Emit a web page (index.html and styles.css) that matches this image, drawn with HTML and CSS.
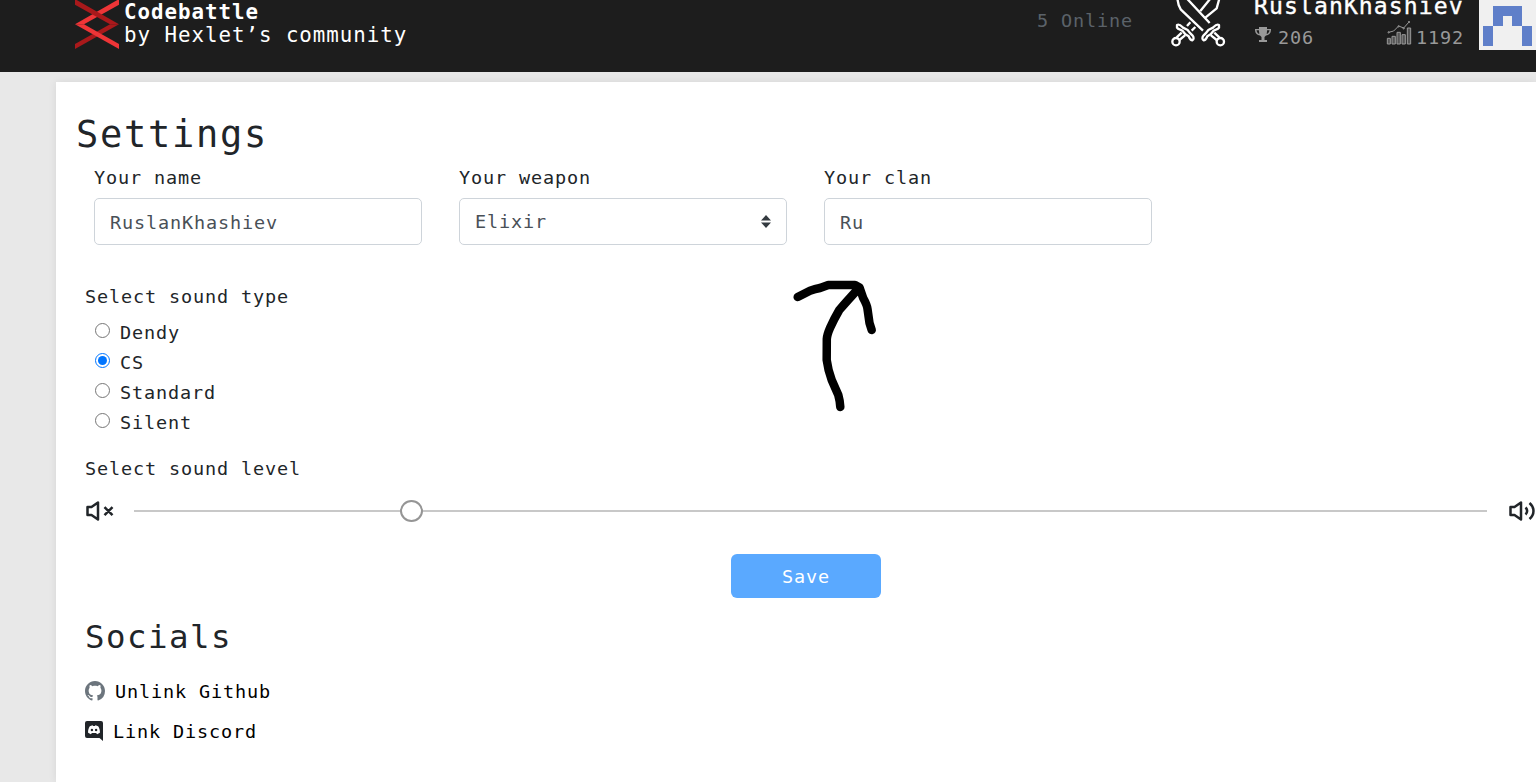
FILE: index.html
```html
<!DOCTYPE html>
<html lang="en">
<head>
<meta charset="utf-8">
<title>Codebattle</title>
<link rel="stylesheet" href="styles.css">
</head>
<body>
<header class="header">
  <svg class="logo" viewBox="45 0 132 147">
    <path fill="#ee3537" d="M45 73 172 0h5v14L72 73z"/>
    <path fill="#a9191b" d="M45 0h5L177 73h-27L45 14z"/>
    <path fill="#a9191b" d="M177 73 45 147v-15L150 73z"/>
    <path fill="#ee3537" d="M45 73 177 147v-15L72 73z"/>
  </svg>
  <div class="brand"><b>Codebattle</b><span>by Hexlet’s community</span></div>
  <div class="online">5 Online</div>
  <svg class="swords" viewBox="450 0 168 144">
    <path d="M472-4 476 15 482 28 549 92M501-4 569 69M598-4 590 25 557 52M571-4 541 33"/>
    <path d="M597 75c-8-4-13 3-18 8l-14 7-6 8-8 8c-5 6-5 12 0 15 6 0 8-5 11-12l10-6 8-10c6-5 13-3 17-10zM573 106l17 14M583 98l15 14"/>
    <path d="M471 75c8-4 13 3 18 8l14 7 6 8 8 8c5 6 5 12 0 15-6 0-8-5-11-12l-10-6-8-10c-6-5-13-3-17-10zM495 106l-17 14M485 98l-15 14M511 67l-10 11M526 81l-11 11"/>
    <circle cx="468" cy="125" r="11"/><circle cx="601" cy="125" r="11"/>
  </svg>
  <div class="user">
    <div class="user-name">RuslanKhashiev</div>
    <div class="stats">
      <svg class="trophy" viewBox="0 0 16 16"><path fill="#999" d="M4 0h8v2h4c0 4-1.500 6-5 6.500L9.500 10v3H12v2H4v-2h2.500v-3L5 8.500C1.500 8 0 6 0 2h4zM1.500 3.200C1.800 5 2.500 6.300 4.300 7L3.900 3.200zM14.500 3.200h-2.400L11.700 7c1.800-.7 2.500-2 2.800-3.800z"/></svg>
      <span class="wins">206</span>
      <svg class="chart" viewBox="438 58 76 75"><path class="bars" d="M441 113h9v17h-9zM455 107h10v23h-10zM470 95h10v35h-10zM485 102h10v28h-10zM501 82h10v48h-10z"/><path class="trend" d="M445 95l15-4 15-15 15 6 16-18"/><circle cx="445" cy="95" r="2"/><circle cx="475" cy="77" r="2"/><circle cx="490" cy="83" r="2"/><circle cx="506" cy="64" r="2"/></svg>
      <span>1192</span>
    </div>
  </div>
  <svg class="avatar" viewBox="0 0 57 50"><path fill="#f0f0f0" d="M0 0h57v50H0z"/><path fill="#5f7fc9" d="M14 6h29v20h10v20H43V26H33V16h-9v10H14v20H4V26h10z"/></svg>
</header>

<main class="card">
  <h1 class="title">Settings</h1>
  <form class="form">
    <div class="fields">
      <label class="field"><span>Your name</span><input class="control" type="text" value="RuslanKhashiev"></label>
      <label class="field"><span>Your weapon</span>
        <span class="control select">Elixir<svg class="caret" viewBox="0 0 10 13"><path fill="#343a40" d="M5 0l5 5.500H0zM0 7.500h10L5 13z"/></svg></span></label>
      <label class="field"><span>Your clan</span><input class="control" type="text" value="Ru"></label>
    </div>
    <div class="legend">Select sound type</div>
    <div class="radios">
      <label class="radio"><input type="radio" name="sound"><span>Dendy</span></label>
      <label class="radio"><input type="radio" name="sound" checked><span>CS</span></label>
      <label class="radio"><input type="radio" name="sound"><span>Standard</span></label>
      <label class="radio"><input type="radio" name="sound"><span>Silent</span></label>
    </div>
    <div class="legend level">Select sound level</div>
    <div class="volume">
      <svg class="mute" viewBox="0 0 28 20"><path d="M1.500 6h4l6.500-4.500v17L5.500 14h-4zM18.500 6.200l8 8M26.500 6.200l-8 8"/></svg>
      <div class="track"><span class="thumb"></span></div>
      <svg class="loud" viewBox="0 0 28 20"><path d="M1.500 6h4L12 1.500v17L5.500 14h-4zM16.500 6.500c2.200 2 2.200 5 0 7M20.500 2c5.300 4.500 5.300 11.500 0 16"/></svg>
    </div>
    <button class="save" type="button">Save</button>
  </form>
  <h2 class="subtitle">Socials</h2>
  <div class="social">
    <svg class="github" viewBox="0 0 16 16"><path fill="#6c757d" d="M8 0C3.580 0 0 3.580 0 8c0 3.540 2.290 6.530 5.470 7.590.4.070.55-.17.55-.38 0-.19-.01-.82-.01-1.490-2.010.37-2.530-.49-2.690-.94-.09-.23-.48-.94-.82-1.130-.28-.15-.68-.52-.01-.53.63-.01 1.080.58 1.230.82.72 1.210 1.870.87 2.330.66.07-.52.28-.87.51-1.070-1.780-.2-3.640-.89-3.640-3.950 0-.87.31-1.590.82-2.150-.08-.2-.36-1.020.08-2.120 0 0 .67-.21 2.200.82.64-.18 1.320-.27 2-.27s1.360.09 2 .27c1.530-1.040 2.200-.82 2.200-.82.44 1.100.16 1.920.08 2.120.51.56.82 1.270.82 2.150 0 3.070-1.870 3.750-3.650 3.950.29.25.54.73.54 1.480 0 1.070-.01 1.930-.01 2.200 0 .21.15.46.55.38A8.010 8.010 0 0 0 16 8c0-4.420-3.580-8-8-8z"/></svg>
    <a>Unlink Github</a>
  </div>
  <div class="social">
    <svg class="discord" viewBox="0 0 18 20"><path fill="#212529" d="M2 0h14a2 2 0 0 1 2 2v18l-3.500-3H2a2 2 0 0 1-2-2V2a2 2 0 0 1 2-2z"/><path fill="#fff" d="M4.800 5.200 7.600 4.200l.5.700h1.800l.5-.7 2.800 1c1.300 2 1.900 4.200 1.700 6.500l-2.800 1.500-1-1.300H6.900l-1 1.300-2.800-1.500c-.2-2.300.4-4.500 1.700-6.500z"/><circle cx="6.900" cy="9" r="1.200" fill="#212529"/><circle cx="11.100" cy="9" r="1.200" fill="#212529"/></svg>
    <a>Link Discord</a>
  </div>
</main>

<svg class="arrow" viewBox="785 270 100 150"><path d="M797.700 297 810 290.700Q815 289 820 288L828.300 285 855 285 859.500 287.500M859.500 287.500 863.300 298.300Q867 305 867.500 309L869.500 323 871.700 330M859.500 287.500Q847 301 839.300 310 834 319 830 328 827 335 826.800 339L826.700 360Q828 370 831.700 380L838.300 395Q840 401 840.300 407"/></svg>
</body>
</html>
```
FILE: styles.css
```css
* { box-sizing: border-box; }
body {
  margin: 0;
  height: 782px;
  overflow: hidden;
  background: #e8e8e8;
  color: #212529;
  font: 18.500px/30px "DejaVu Sans Mono", monospace;
}
/* Widens the glyph pitch evenly at every size. */
* { letter-spacing: .0466em; }
svg { display: block; flex: none; }
.header {
  display: flex;
  align-items: flex-start;
  height: 72px;
  padding-left: 75px;
  overflow: hidden;
  background: #1d1d1d;
  color: #fff;
}
.logo { width: 44px; height: 49px; }
.brand {
  display: flex;
  flex: none;
  flex-direction: column;
  width: 917px;
  padding: 1px 0 0 5px;
  font-size: 20.800px;
  line-height: 23px;
}
.online { flex: none; width: 134px; padding: 6px 0 0 1px; color: #5b6269; }
.swords { width: 56px; height: 48px; fill: none; stroke: #fff; stroke-width: 7; stroke-linejoin: round; }
.user { flex: none; width: 225px; margin: -10px 0 0 28px; }
.user-name { font-size: 23.100px; line-height: 32px; -webkit-text-stroke: .4px #fff; }
.stats { display: flex; align-items: flex-start; color: #999; }
.trophy { width: 16px; height: 16px; margin: 5px 7px 0 1px; }
.wins { width: 108px; }
.stats span { padding-top: 1px; line-height: 30px; }
.chart { width: 26px; height: 25px; margin: -2px 4px 0 0; fill: #555; stroke: #999; stroke-width: 3; }
.trend { fill: none; }
.avatar { width: 57px; height: 50px; }

.card {
  height: 700px;
  margin: 10px 0 0 56px;
  padding: 27px 0 0 20px;
  background: #fff;
  box-shadow: 0 0 8px rgba(0, 0, 0, .08);
}
.title { height: 50px; margin: 0; font-size: 37px; font-weight: 400; line-height: 51px; }
.form { display: flex; flex-direction: column; padding-left: 10px; }
.fields { display: flex; gap: 37.500px; padding: 4px 0 0 8px; }
.field { width: 327.500px; }
.field > span:first-child { display: block; height: 35px; }
.control {
  display: flex;
  align-items: center;
  width: 100%;
  height: 47px;
  padding: 0 15px;
  border: 1px solid #ced4da;
  border-radius: 5px;
  background: #fff;
  color: #495057;
  font: inherit;
}
input.control { padding-top: 2px; }
.select { justify-content: space-between; }
.caret { width: 10px; height: 13px; }
.legend { height: 30px; margin: 37px 0 0 -1px; }
.radios { padding: 4px 0 0 9px; }
.radio { display: flex; align-items: flex-start; gap: 10px; height: 30px; }
.radio input { width: 15px; height: 15px; margin: 7px 0 0; accent-color: #0075ff; }
.radio span { padding-top: 2px; }
.level { margin-top: 18px; }
.volume { display: flex; align-items: center; height: 20px; margin-top: 17px; }
.volume svg { width: 28px; height: 20px; fill: none; stroke: #212529; stroke-width: 2.500; stroke-linejoin: round; }
.track { position: relative; flex: none; width: 1353px; height: 2px; margin: 0 22px 0 20px; background: #c8c8c8; }
.thumb {
  position: absolute;
  left: 266px;
  top: -10px;
  width: 23px;
  height: 22px;
  border: 2px solid #959595;
  border-radius: 50%;
  background: #fff;
}
.save {
  width: 150px;
  height: 44px;
  margin: 33px 0 0 645px;
  padding: 1px 0 0;
  border: 0;
  border-radius: 6px;
  background: #5aa9ff;
  color: #fff;
  font: inherit;
}
.subtitle { height: 50px; margin: 14px 0 14px 9px; font-size: 32.400px; font-weight: 400; line-height: 51px; }
.social { display: flex; align-items: center; gap: 10px; height: 30px; margin-bottom: 10px; padding-left: 9px; color: #000; }
.social a { padding-top: 2px; }
.github { width: 20px; height: 20px; }
.discord { width: 18px; height: 20px; }
.arrow {
  position: absolute;
  left: 785px;
  top: 270px;
  width: 100px;
  height: 150px;
  fill: none;
  stroke: #000;
  stroke-width: 8.500;
  stroke-linecap: round;
  stroke-linejoin: round;
}
```
